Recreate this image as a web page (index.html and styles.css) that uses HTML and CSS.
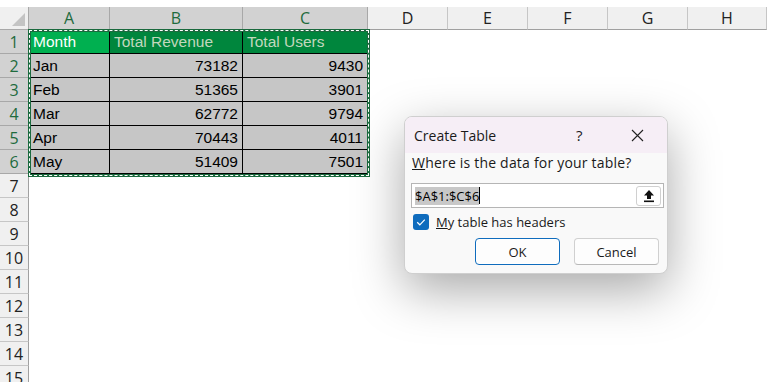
FILE: index.html
```html
<!DOCTYPE html>
<html lang="en">
<head>
    <meta charset="UTF-8">
    <meta name="viewport" content="width=device-width, initial-scale=1.0">
    <title>Create Table</title>
    <link rel="stylesheet" href="styles.css">
</head>
<body>

<div class="sheet">
    <!-- Column headers -->
    <div class="corner"></div>
    <div class="colhead sel">A</div>
    <div class="colhead sel">B</div>
    <div class="colhead sel">C</div>
    <div class="colhead">D</div>
    <div class="colhead">E</div>
    <div class="colhead">F</div>
    <div class="colhead">G</div>
    <div class="colhead">H</div>

    <!-- Table rows -->
    <div class="rowhead sel">1</div>
    <div class="cell head active">Month</div>
    <div class="cell head">Total Revenue</div>
    <div class="cell head">Total Users</div>
    <div class="blank"></div>

    <div class="rowhead sel">2</div>
    <div class="cell">Jan</div>
    <div class="cell num">73182</div>
    <div class="cell num">9430</div>
    <div class="blank"></div>

    <div class="rowhead sel">3</div>
    <div class="cell">Feb</div>
    <div class="cell num">51365</div>
    <div class="cell num">3901</div>
    <div class="blank"></div>

    <div class="rowhead sel">4</div>
    <div class="cell">Mar</div>
    <div class="cell num">62772</div>
    <div class="cell num">9794</div>
    <div class="blank"></div>

    <div class="rowhead sel">5</div>
    <div class="cell">Apr</div>
    <div class="cell num">70443</div>
    <div class="cell num">4011</div>
    <div class="blank"></div>

    <div class="rowhead sel">6</div>
    <div class="cell">May</div>
    <div class="cell num">51409</div>
    <div class="cell num">7501</div>
    <div class="blank"></div>

    <!-- Empty rows -->
    <div class="rowhead">7</div><div class="blank wide"></div>
    <div class="rowhead">8</div><div class="blank wide"></div>
    <div class="rowhead">9</div><div class="blank wide"></div>
    <div class="rowhead">10</div><div class="blank wide"></div>
    <div class="rowhead">11</div><div class="blank wide"></div>
    <div class="rowhead">12</div><div class="blank wide"></div>
    <div class="rowhead">13</div><div class="blank wide"></div>
    <div class="rowhead">14</div><div class="blank wide"></div>
    <div class="rowhead">15</div><div class="blank wide"></div>

    <!-- Copy range marching ants -->
    <div class="ants"></div>
</div>

<!-- Create Table dialog -->
<div class="dialog">
    <div class="dialog-title">
        <span class="title-text">Create Table</span>
        <span class="help">?</span>
        <svg class="close" width="13" height="13" viewBox="0 0 13 13">
            <path d="M1 1 L12 12 M12 1 L1 12" stroke="#222" stroke-width="1.1" fill="none"/>
        </svg>
    </div>
    <div class="dialog-body">
        <div class="prompt"><u>W</u>here is the data for your table?</div>
        <div class="range-input">
            <span class="range-text">$A$1:$C$6</span><span class="caret"></span>
            <div class="collapse-btn">
                <svg width="12" height="14" viewBox="0 0 12 14">
                    <path d="M6 1 L11 6.5 H8 V10 H4 V6.5 H1 Z" fill="#111"/>
                    <rect x="1" y="11.5" width="10" height="1.6" fill="#111"/>
                </svg>
            </div>
        </div>
        <div class="check-row">
            <div class="checkbox">
                <svg width="16" height="16" viewBox="0 0 16 16">
                    <path d="M4.2 8.3 L6.8 10.8 L11.8 5.6" stroke="#fff" stroke-width="1.2" fill="none"/>
                </svg>
            </div>
            <span><u>M</u>y table has headers</span>
        </div>
        <div class="buttons">
            <button class="btn primary">OK</button>
            <button class="btn">Cancel</button>
        </div>
    </div>
</div>

</body>
</html>
```

FILE: styles.css
```css
/* Basic reset */
html, body {
    margin: 0;
    padding: 0;
    background-color: #fff;
    overflow: hidden;
}

body {
    width: 767px;
    height: 382px;
    padding-top: 7px;
    box-sizing: border-box;
    position: relative;
    font-family: "Liberation Sans", Arial, sans-serif;
}

/* Spreadsheet grid */
.sheet {
    position: relative;
    display: grid;
    grid-template-columns: 29px 81px 133px 125px 80px 80px 80px 80px 79px;
    grid-template-rows: 23px repeat(15, 24px);
    font-size: 15px;
}

.corner {
    background-color: #f0f0f0;
    border-right: 1px solid #a8a8a8;
    border-bottom: 1px solid #a8a8a8;
    position: relative;
}

.corner::after {
    content: "";
    position: absolute;
    right: 3px;
    bottom: 3px;
    border-left: 13px solid transparent;
    border-bottom: 13px solid #c4c4c4;
}

.colhead {
    background-color: #f0f0f0;
    border-right: 1px solid #c6c6c6;
    border-bottom: 1px solid #a0a0a0;
    color: #222;
    display: flex;
    align-items: center;
    justify-content: center;
    font-family: "Open Sans", sans-serif;
    font-size: 16px;
}

.colhead.sel {
    background-color: #d2d2d2;
    color: #1e6b3d;
    border-right-color: #a8a8a8;
}

.rowhead {
    background-color: #f0f0f0;
    border-right: 1px solid #a0a0a0;
    border-bottom: 1px solid #c6c6c6;
    color: #222;
    display: flex;
    align-items: center;
    justify-content: center;
    font-family: "Open Sans", sans-serif;
    font-size: 16px;
}

.rowhead.sel {
    background-color: #d2d2d2;
    color: #1e6b3d;
    border-bottom-color: #a8a8a8;
}

/* Data cells */
.cell {
    background-color: #c6c6c6;
    border-right: 1px solid #000;
    border-bottom: 1px solid #000;
    color: #000;
    display: flex;
    align-items: center;
    padding: 0 4px;
    white-space: nowrap;
    font-size: 15.5px;
}

.cell.num {
    justify-content: flex-end;
}

.cell.head {
    background-color: #00863d;
    color: #c2d8bd;
}

.cell.head.active {
    background-color: #00b050;
    color: #fff;
}

.blank {
    grid-column: span 5;
}

.blank.wide {
    grid-column: span 8;
}

/* Marching ants around copied range */
.ants {
    position: absolute;
    left: 28px;
    top: 22px;
    width: 342px;
    height: 148px;
    box-sizing: border-box;
    border: 3px solid #1b6a3e;
}

.ants::after {
    content: "";
    position: absolute;
    inset: -2px;
    border: 1px dashed #fff;
}

/* Dialog */
.dialog {
    position: absolute;
    left: 404px;
    top: 116px;
    width: 264px;
    height: 158px;
    box-sizing: border-box;
    border: 1px solid #cfcfcf;
    border-radius: 8px;
    background-color: #f9f9f9;
    box-shadow: 0 16px 50px rgba(0, 0, 0, 0.34);
    overflow: hidden;
    font-family: "Open Sans", sans-serif;
    font-size: 13px;
    color: #1a1a1a;
}

.dialog-title {
    height: 36px;
    background-color: #f6eef6;
    display: flex;
    align-items: center;
    padding-left: 9px;
}

.title-text {
    font-size: 14px;
    width: 162px;
}

.help {
    font-size: 15px;
    width: 55px;
}

.close {
    margin-top: 1px;
}

.dialog-body {
    padding: 0 3px 0 6px;
}

.prompt {
    height: 19px;
    line-height: 19px;
    margin-left: 1px;
    font-size: 14px;
    letter-spacing: 0.2px;
}

.range-input {
    margin-top: 11px;
    height: 25px;
    box-sizing: border-box;
    border: 1px solid #b5b5b5;
    background-color: #fff;
    display: flex;
    align-items: center;
    padding-left: 3px;
    padding-right: 2px;
}

.range-text {
    background-color: #c8c8c8;
    line-height: 18px;
    color: #000;
}

.caret {
    width: 1px;
    height: 17px;
    background-color: #000;
}

.collapse-btn {
    margin-left: auto;
    width: 25px;
    height: 20px;
    box-sizing: border-box;
    border: 1px solid #d0d0d0;
    border-radius: 3px;
    display: flex;
    align-items: center;
    justify-content: center;
    background-color: #fff;
}

.check-row {
    margin-top: 5px;
    display: flex;
    align-items: center;
    height: 17px;
}

.checkbox {
    width: 16px;
    height: 16px;
    border-radius: 3px;
    background-color: #0f6cbd;
    margin-left: 2px;
    margin-right: 7px;
}

.checkbox svg {
    display: block;
}

.buttons {
    margin-top: 8px;
    display: flex;
    justify-content: flex-end;
    gap: 14px;
    padding-right: 5px;
}

.btn {
    width: 85px;
    height: 27px;
    box-sizing: border-box;
    border: 1px solid #d0d0d0;
    border-bottom-color: #b8b8b8;
    border-radius: 4px;
    background-color: #fdfdfd;
    font-family: "Open Sans", sans-serif;
    font-size: 13px;
    color: #1a1a1a;
    padding: 0;
}

.btn.primary {
    border: 1px solid #0f6cbd;
    box-shadow: inset 0 0 0 1px #fff;
}
```
